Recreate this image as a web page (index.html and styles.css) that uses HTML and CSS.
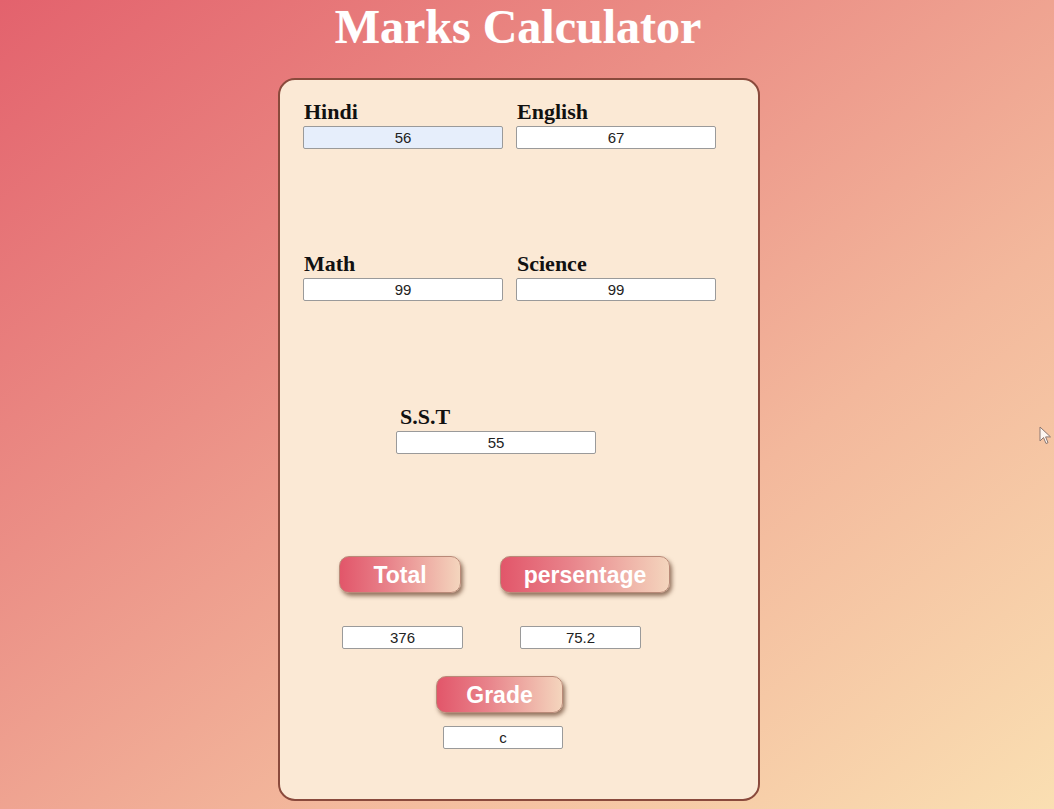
FILE: index.html
```html
<!DOCTYPE html>
<html>
<head>
<meta charset="utf-8">
<title>Marks Calculator</title>
<link rel="stylesheet" href="styles.css">
</head>
<body>
<div class="page">
  <h1 class="title">Marks Calculator</h1>
  <div class="card">
    <div class="pair">
      <div class="field">
        <label class="lbl">Hindi</label>
        <input class="box box-auto" type="text" value="56">
      </div>
      <div class="field">
        <label class="lbl">English</label>
        <input class="box" type="text" value="67">
      </div>
    </div>
    <div class="pair pair-gap">
      <div class="field">
        <label class="lbl">Math</label>
        <input class="box" type="text" value="99">
      </div>
      <div class="field">
        <label class="lbl">Science</label>
        <input class="box" type="text" value="99">
      </div>
    </div>
    <div class="field field-sst">
      <label class="lbl lbl-sst">S.S.T</label>
      <input class="box" type="text" value="55">
    </div>
    <div class="btn-row">
      <button class="btn btn-total">Total</button>
      <button class="btn btn-pct">persentage</button>
    </div>
    <div class="out-row">
      <input class="box out out-total" type="text" value="376">
      <input class="box out out-pct" type="text" value="75.2">
    </div>
    <div class="grade-col">
      <button class="btn btn-grade">Grade</button>
      <input class="box out out-grade" type="text" value="c">
    </div>
  </div>
</div>
<svg class="cursor" width="14" height="20" viewBox="0 0 14 20">
  <path d="M1 1 L1 15 L4.5 11.5 L7 17.5 L9 16.7 L6.6 10.9 L11.5 10.9 Z" fill="#fff" stroke="#7a6a68" stroke-width="1"/>
</svg>
</body>
</html>
```
FILE: styles.css
```css
html, body {
  margin: 0;
  padding: 0;
}
body {
  width: 1054px;
  height: 809px;
  overflow: hidden;
  background: linear-gradient(to bottom right, #e3626d 0%, #eb8f86 35%, #f3b89c 65%, #fadfb2 100%);
  font-family: "Liberation Serif", "Times New Roman", serif;
  position: relative;
}
.page {
  width: 1038px;
  display: flex;
  flex-direction: column;
  align-items: center;
}
.title {
  margin: 0;
  font-size: 48px;
  font-weight: bold;
  color: #ffffff;
  line-height: 53px;
  padding-right: 2px;
  text-shadow: 0 0 1px rgba(255,255,255,0.4);
}
.card {
  margin-top: 25px;
  width: 478px;
  height: 719px;
  box-sizing: content-box;
  border: 2px solid #8a4a3c;
  border-radius: 17px;
  background: #fbe9d5;
  padding: 0;
  display: flex;
  flex-direction: column;
}
.pair {
  display: flex;
  gap: 13px;
  padding-left: 23px;
  margin-top: 20px;
}
.pair-gap {
  margin-top: 103px;
}
.field {
  display: flex;
  flex-direction: column;
  width: 200px;
}
.lbl {
  font-family: "Liberation Serif", "Times New Roman", serif;
  font-weight: bold;
  font-size: 22px;
  line-height: 24px;
  color: #111;
  padding-left: 1px;
  margin-bottom: 2px;
}
.box {
  box-sizing: border-box;
  width: 200px;
  height: 23px;
  border: 1px solid #9a9a9a;
  border-radius: 2px;
  background: #ffffff;
  font-family: "Liberation Sans", Arial, sans-serif;
  font-size: 15px;
  color: #222;
  text-align: center;
  padding: 0;
  margin: 0;
  outline: none;
}
.box-auto {
  background: #e6eefb;
}
.field-sst {
  margin-top: 104px;
  margin-left: 116px;
}
.lbl-sst {
  padding-left: 4px;
}
.btn-row {
  display: flex;
  gap: 39px;
  margin-top: 102px;
  padding-left: 59px;
}
.btn {
  height: 37px;
  border: 1px solid #b98a78;
  border-radius: 10px;
  background: linear-gradient(to right, #e2566a 0%, #e8828a 40%, #f4d5bd 100%);
  color: #ffffff;
  font-family: "Liberation Sans", Arial, sans-serif;
  font-weight: bold;
  font-size: 23px;
  padding: 2px 0 0 0;
  box-shadow: 2px 3px 4px rgba(90, 50, 30, 0.65);
  cursor: pointer;
}
.btn-total {
  width: 122px;
}
.btn-pct {
  width: 170px;
}
.out-row {
  display: flex;
  gap: 57px;
  margin-top: 33px;
  padding-left: 62px;
}
.out {
  width: 121px;
}
.out-grade {
  width: 120px;
  margin-top: 13px;
  margin-left: 7px;
}
.grade-col {
  display: flex;
  flex-direction: column;
  align-items: flex-start;
  margin-top: 27px;
  padding-left: 156px;
}
.btn-grade {
  width: 127px;
}
.cursor {
  position: absolute;
  left: 1039px;
  top: 426px;
  opacity: 0.85;
}
```
